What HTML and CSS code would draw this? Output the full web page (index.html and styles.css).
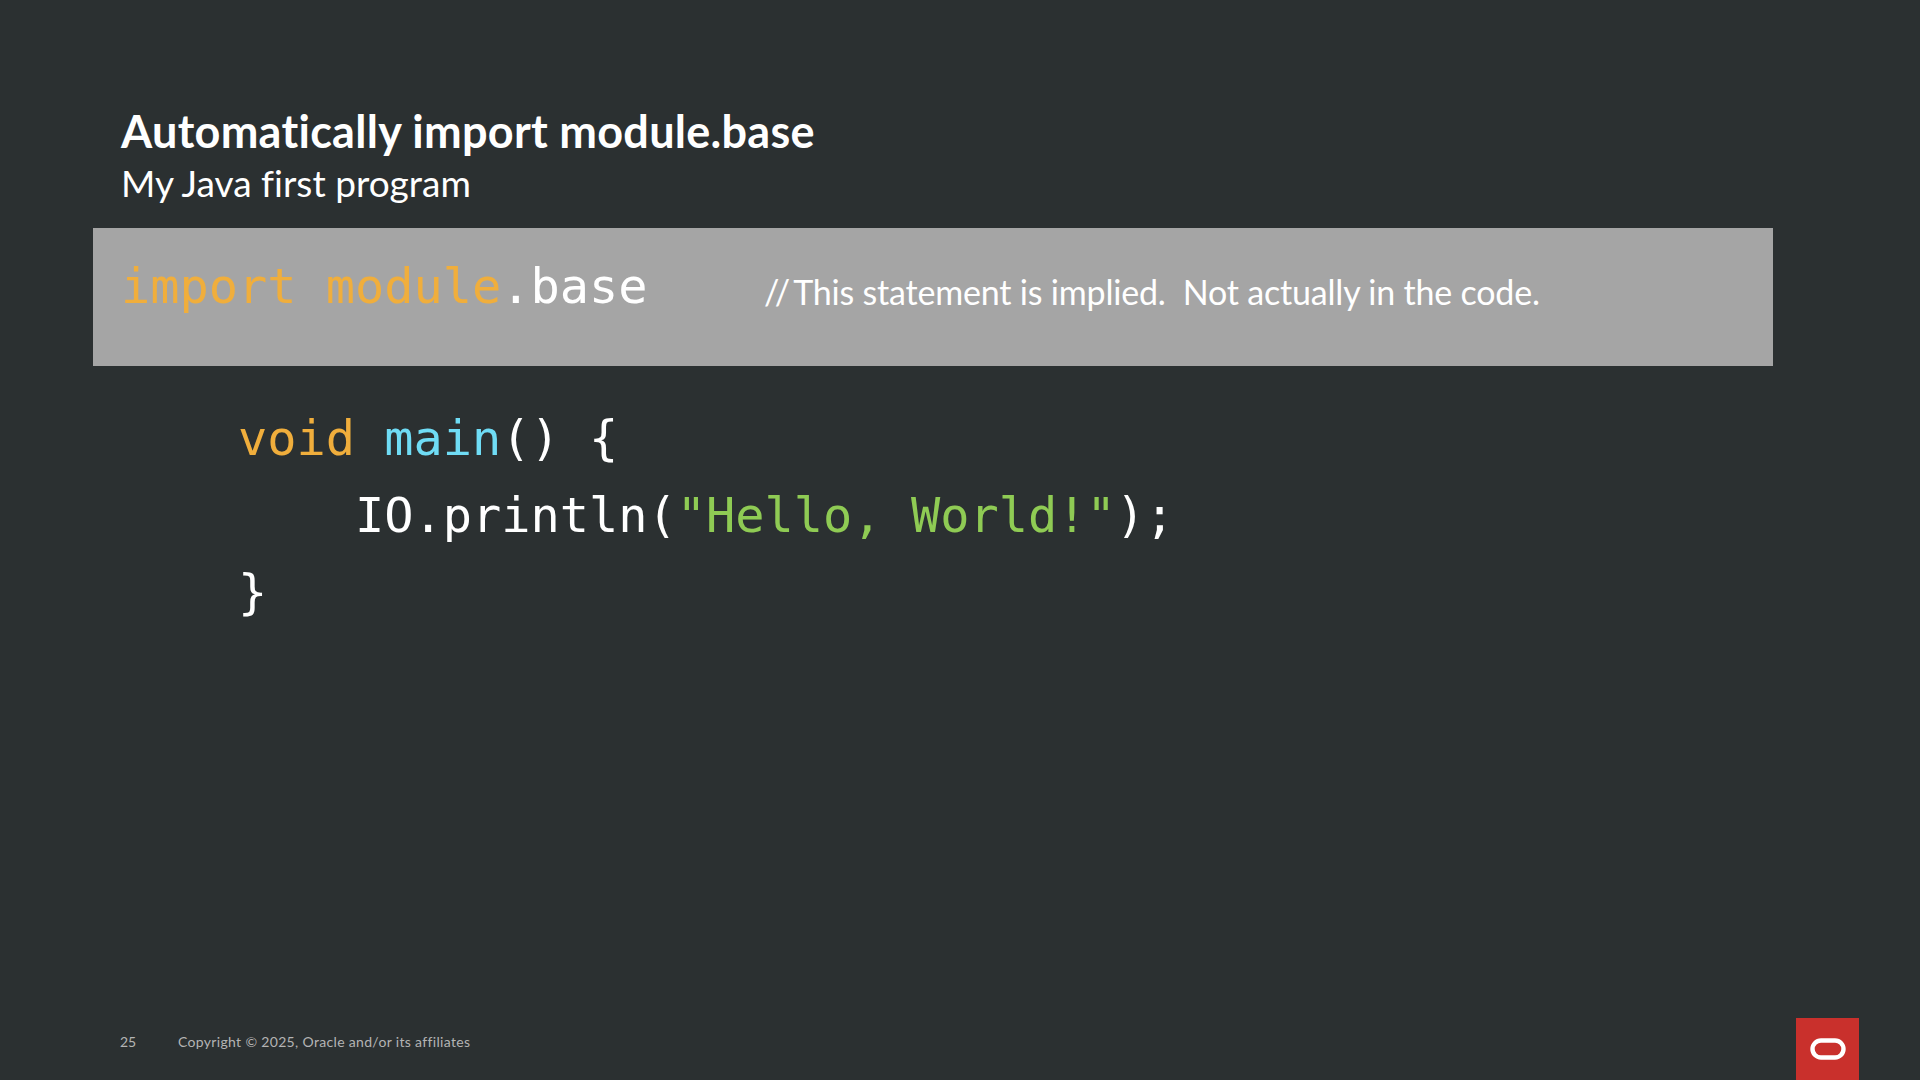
FILE: index.html
```html
<!DOCTYPE html>
<html lang="en">
<head>
<meta charset="utf-8">
<title>Automatically import module.base</title>
<link rel="stylesheet" href="styles.css">
</head>
<body>
<main class="slide">
  <header class="heading">
    <h1 class="title">Automatically import module.base</h1>
    <p class="subtitle">My Java first program</p>
  </header>
  <section class="band">
    <code class="code"><span class="kw">import module</span>.base</code>
    <span class="comment"><span class="slashes">//</span>This statement is implied.&nbsp; Not actually in the code.</span>
  </section>
  <pre class="code listing"><span class="kw">void</span> <span class="fn">main</span>() {
    IO.println(<span class="str">"Hello, World!"</span>);
}</pre>
  <footer class="footer">
    <span class="page">25</span>
    <span class="copy">Copyright © 2025, Oracle and/or its affiliates</span>
    <div class="logo">
      <svg class="oval" viewBox="0 0 36 22" width="36" height="22"><rect x="2.5" y="2.5" width="31" height="17" rx="8.5" fill="none" stroke="#fff" stroke-width="4.4"/></svg>
    </div>
  </footer>
</main>
</body>
</html>
```
FILE: styles.css
```css
* { box-sizing: border-box; }
html, body { margin: 0; padding: 0; }
body { background: #2b3031; }
.slide {
  width: 1920px;
  height: 1080px;
  display: flex;
  flex-direction: column;
  background: #2b3031;
  color: #fff;
  font-family: "Lato", "Liberation Sans", sans-serif;
  overflow: hidden;
}
.heading { padding: 104px 0 0 121px; height: 228px; }
.title { margin: 0; font-size: 45px; line-height: 54px; font-weight: 700; letter-spacing: 0.28px; }
.subtitle { margin: 0; font-size: 37px; line-height: 50px; font-weight: 400; letter-spacing: 0.02px; }
.band {
  width: 1680px;
  height: 138px;
  margin-left: 93px;
  padding: 28px 0 0 28px;
  background: #a5a5a5;
  display: flex;
  align-items: flex-start;
}
.code {
  font-family: "DejaVu Sans Mono", monospace;
  font-size: 48.6px;
  line-height: 60px;
}
.band .code { width: 643px; flex: none; }
.comment { font-size: 34px; line-height: 44px; margin-top: 14px; letter-spacing: -0.19px; }
.slashes { letter-spacing: 3px; }
.kw { color: #f0ae3c; }
.fn { color: #6fdcf5; }
.str { color: #8fcb54; }
.listing { margin: 34px 0 0 238px; line-height: 77px; height: 231px; }
.footer {
  margin-top: auto;
  height: 62px;
  display: flex;
  align-items: flex-start;
  padding-left: 120px;
  padding-top: 13px;
  color: #b4b4b4;
  font-size: 14px;
  line-height: 22px;
}
.page { width: 58px; }
.copy { letter-spacing: 0.33px; }
.logo {
  width: 63px;
  height: 62px;
  margin-top: -13px;
  margin-left: auto;
  margin-right: 61px;
  background: #c9302c;
  display: flex;
  align-items: center;
  justify-content: center;
}
```
